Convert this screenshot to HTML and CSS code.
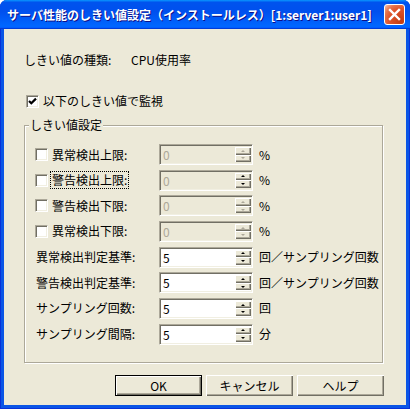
FILE: index.html
```html
<!DOCTYPE html>
<html lang="ja">
<head>
    <meta charset="UTF-8">
    <title>サーバ性能のしきい値設定</title>
    <link rel="stylesheet" href="styles.css">
</head>
<body>
<div class="window">
    <div class="titlebar">
        <span class="title">サーバ性能のしきい値設定（インストールレス）[1:server1:user1]</span>
        <span class="close">
            <svg width="13" height="13" viewBox="0 0 13 13"><path d="M2 2 L11 11 M11 2 L2 11" stroke="#fff" stroke-width="2.4" stroke-linecap="square"/></svg>
        </span>
    </div>

    <div class="client">
        <div class="type-row">
            <span class="type-label">しきい値の種類:</span>
            <span>CPU使用率</span>
        </div>

        <div class="check-line main-check">
            <span class="checkbox">
                <svg width="9" height="9" viewBox="0 0 9 9"><path d="M1 4 L3.3 6.3 L8 1.6" stroke="#000" stroke-width="2.2" fill="none"/></svg>
            </span>
            <span>以下のしきい値で監視</span>
        </div>

        <div class="group">
            <div class="legend">しきい値設定</div>
            <div class="rows">
                <div class="row">
                    <div class="check-line"><span class="checkbox"></span><span>異常検出上限:</span></div>
                    <div class="spin disabled"><span class="spin-field">0</span><span class="spin-btns"><span class="up"></span><span class="down"></span></span></div>
                    <span class="unit">%</span>
                </div>
                <div class="row">
                    <div class="check-line"><span class="checkbox"></span><span class="focus">警告検出上限:</span></div>
                    <div class="spin disabled"><span class="spin-field">0</span><span class="spin-btns active"><span class="up"></span><span class="down"></span></span></div>
                    <span class="unit">%</span>
                </div>
                <div class="row">
                    <div class="check-line"><span class="checkbox"></span><span>警告検出下限:</span></div>
                    <div class="spin disabled"><span class="spin-field">0</span><span class="spin-btns"><span class="up"></span><span class="down"></span></span></div>
                    <span class="unit">%</span>
                </div>
                <div class="row">
                    <div class="check-line"><span class="checkbox"></span><span>異常検出下限:</span></div>
                    <div class="spin disabled"><span class="spin-field">0</span><span class="spin-btns"><span class="up"></span><span class="down"></span></span></div>
                    <span class="unit">%</span>
                </div>
                <div class="row">
                    <span class="plain-label">異常検出判定基準:</span>
                    <div class="spin"><span class="spin-field">5</span><span class="spin-btns active"><span class="up"></span><span class="down"></span></span></div>
                    <span class="unit">回／サンプリング回数</span>
                </div>
                <div class="row">
                    <span class="plain-label">警告検出判定基準:</span>
                    <div class="spin"><span class="spin-field">5</span><span class="spin-btns active"><span class="up"></span><span class="down"></span></span></div>
                    <span class="unit">回／サンプリング回数</span>
                </div>
                <div class="row">
                    <span class="plain-label">サンプリング回数:</span>
                    <div class="spin"><span class="spin-field">5</span><span class="spin-btns active"><span class="up"></span><span class="down"></span></span></div>
                    <span class="unit">回</span>
                </div>
                <div class="row">
                    <span class="plain-label">サンプリング間隔:</span>
                    <div class="spin"><span class="spin-field">5</span><span class="spin-btns active"><span class="up"></span><span class="down"></span></span></div>
                    <span class="unit">分</span>
                </div>
            </div>
        </div>

        <div class="buttons">
            <span class="btn default">OK</span>
            <span class="btn">キャンセル</span>
            <span class="btn">ヘルプ</span>
        </div>
    </div>
</div>
</body>
</html>
```

FILE: styles.css
```css
body {
    margin: 0;
    font-family: "Noto Sans CJK JP", "DejaVu Sans", sans-serif;
    font-size: 12px;
    color: #000;
    background: #fff;
}

.window {
    width: 410px;
    height: 409px;
    display: flex;
    flex-direction: column;
    box-sizing: border-box;
    background: #0a55e6;
    border-radius: 7px 7px 0 0;
    box-shadow: inset 1px 0 #0831d9, inset -1px 0 #0831d9, inset 0 -1px #0831d9;
    overflow: hidden;
}

/* title bar */
.titlebar {
    height: 29px;
    flex: none;
    display: flex;
    align-items: center;
    justify-content: space-between;
    padding: 0 5px 0 7px;
    background: linear-gradient(180deg, #0997ff, #0053ee 8%, #0050ee 40%, #0066ff 88%, #0066ff 93%, #005bff 95%, #003dd7 96%, #003dd7);
}

.title {
    color: #fff;
    font-weight: bold;
    font-size: 12px;
    white-space: nowrap;
    text-shadow: 1px 1px #0f1089;
}

.close {
    width: 21px;
    height: 21px;
    box-sizing: border-box;
    display: flex;
    align-items: center;
    justify-content: center;
    border: 1px solid #fff;
    border-radius: 3px;
    background: radial-gradient(circle at 85% 85%, #c43c10, #e0552c 55%, #e8744c 75%, #f7b39a 95%);
}

/* client area */
.client {
    flex: 1;
    margin: 0 4px 4px;
    padding: 23px 0 0 20px;
    background: #ece9d8;
}

.type-row {
    display: flex;
    line-height: 16px;
}

.type-label {
    width: 107px;
}

.check-line {
    display: flex;
    align-items: center;
    gap: 4px;
    line-height: 16px;
}

.main-check {
    margin: 25px 0 0 2px;
}

.checkbox {
    width: 13px;
    height: 13px;
    box-sizing: border-box;
    display: flex;
    align-items: center;
    justify-content: center;
    background: #fff;
    border: 1px solid;
    border-color: #aca899 #fff #fff #aca899;
    box-shadow: inset 1px 1px #716f64, inset -1px -1px #f1efe2;
}

.focus {
    outline: 1px dotted #000;
    margin-left: -1px;
    padding: 0 1px;
}

/* group box */
.group {
    width: 359px;
    height: 238px;
    box-sizing: border-box;
    margin-top: 16px;
    padding: 0 0 0 10px;
    border: 1px solid #aca899;
    box-shadow: inset 1px 1px #fff, 1px 1px #fff;
}

.legend {
    width: fit-content;
    margin: -8px 0 0 -6px;
    padding: 0 1px;
    line-height: 14px;
    background: #ece9d8;
}

.rows {
    display: flex;
    flex-direction: column;
    gap: 4.67px;
    margin-top: 12px;
}

.row {
    display: grid;
    grid-template-columns: 124px 94px auto;
    align-items: center;
    height: 21px;
    line-height: 16px;
}

.plain-label {
    padding-left: 1px;
}

/* spin edit */
.spin {
    height: 21px;
    box-sizing: border-box;
    display: flex;
    padding: 2px 1px 2px 2px;
    background: #fff;
    border: 1px solid;
    border-color: #aca899 #fff #fff #aca899;
    box-shadow: inset 1px 1px #716f64, inset -1px -1px #f1efe2;
}

.spin.disabled {
    background: #ece9d8;
    color: #aca899;
}

.spin-field {
    flex: 1;
    padding-left: 1px;
    line-height: 15px;
}

.spin-btns {
    width: 16px;
    display: flex;
    flex-direction: column;
    background: #ece9d8;
}

.spin-btns span {
    flex: 1;
    display: flex;
    align-items: center;
    justify-content: center;
    background: #ece9d8;
    box-shadow: inset 1px 1px #fff, inset -1px -1px #716f64, inset -2px -2px #aca899;
}

.spin-btns span::after {
    content: "";
    border-left: 2px solid transparent;
    border-right: 2px solid transparent;
}

.spin-btns .up::after {
    border-bottom: 2px solid #aca899;
}

.spin-btns .down::after {
    border-top: 2px solid #aca899;
}

.spin-btns.active .up::after {
    border-bottom-color: #000;
}

.spin-btns.active .down::after {
    border-top-color: #000;
}

.unit {
    margin-left: 6px;
    white-space: nowrap;
}

/* dialog buttons */
.buttons {
    display: flex;
    gap: 4px;
    margin: 12px 0 0 91px;
}

.btn {
    width: 87px;
    height: 21px;
    box-sizing: border-box;
    display: flex;
    align-items: center;
    justify-content: center;
    background: #ece9d8;
    box-shadow: inset 1px 1px #fff, inset -1px -1px #716f64, inset -2px -2px #aca899;
}

.btn.default {
    border: 1px solid #000;
}
```
